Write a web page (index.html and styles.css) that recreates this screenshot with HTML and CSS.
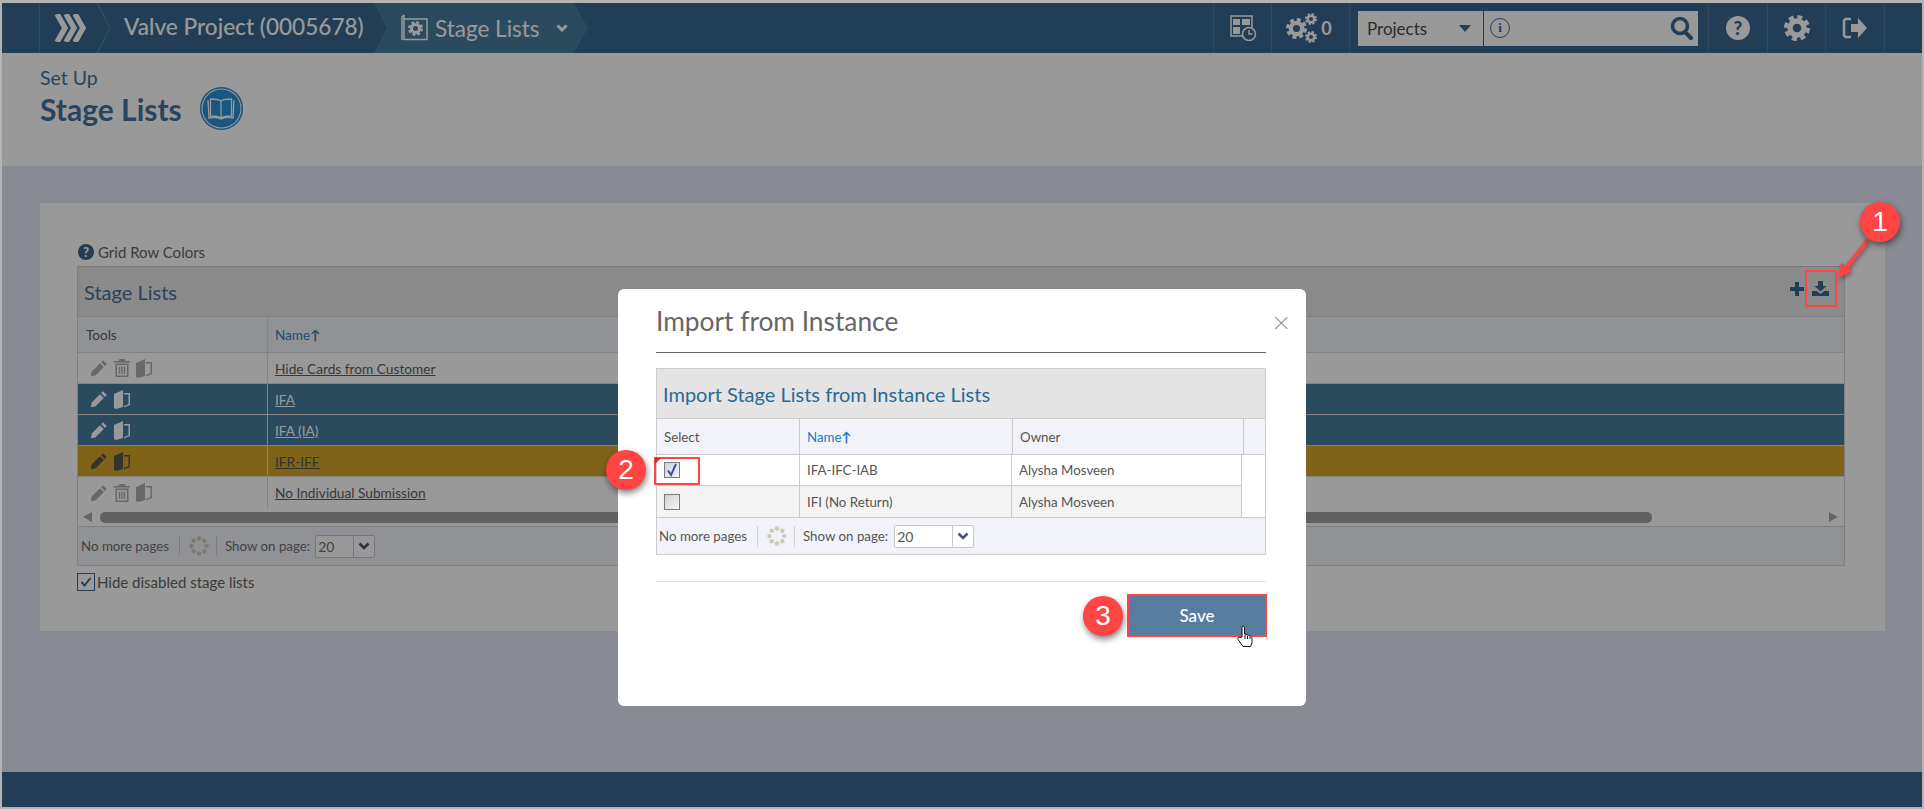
FILE: index.html
```html
<!DOCTYPE html>
<html lang="en">
<head>
<meta charset="utf-8">
<title>Stage Lists</title>
<link rel="stylesheet" href="styles.css">
</head>
<body>
<svg class="defs" width="0" height="0" aria-hidden="true">
  <symbol id="i-pencil" viewBox="0 0 18 18"><path d="M13 1.2l3.8 3.8-1.9 1.9L11.1 3.1zM10 4.2L13.8 8l-8.4 8.4-4.6.9.9-4.7z"/></symbol>
  <symbol id="i-trash" viewBox="0 0 16 18"><path d="M5.5 0h5l1 2H16v1.6H0V2h4.5zM1.5 4.6h13V18h-13zM3 6v10.500h10V6zM4.800 7.500h1.400v7.600H4.800zM7.300 7.500h1.400v7.600H7.300zM9.800 7.500h1.400v7.600H9.800z" fill-rule="evenodd"/></symbol>
  <symbol id="i-doors" viewBox="0 0 16 19"><path d="M0 4l9-4v17l-7 2-2-1zM10 3h6v12l-6 2.500V16l4.500-1.800V4.500H10z"/></symbol>
  <symbol id="i-gear" viewBox="0 0 24 24"><circle cx="12" cy="12" r="6.500" fill="none" stroke="currentColor" stroke-width="5"/><circle cx="12" cy="12" r="10" fill="none" stroke="currentColor" stroke-width="4" stroke-dasharray="4.500 3.354"/></symbol>
</svg>

<div class="page">
  <header class="topbar">
    <div class="tb-gutter"></div>
    <div class="crumb-logo">
      <svg width="34" height="28" viewBox="0 0 34 28"><path d="M3 0l8 14-8 14M12 0l8 14-8 14M21 0l8 14-8 14"/></svg>
    </div>
    <svg class="crumb-sep" width="13" height="50" viewBox="0 0 13 50"><path d="M0 0l13 25L0 50"/></svg>
    <div class="crumb-project">Valve Project (0005678)</div>
    <div class="crumb-stage">
      <svg class="stage-ico" width="27" height="28" viewBox="0 0 27 28">
        <path class="ico-line" d="M3 1v24.500h23V5H3M3 1L1 3v23"/>
        <use href="#i-gear" x="7" y="7" width="15" height="15"/>
      </svg>
      <span>Stage Lists</span>
      <svg class="chev" width="12" height="8" viewBox="0 0 12 8"><path d="M1.500 1.500L6 6l4.500-4.500"/></svg>
    </div>
    <div class="tb-right">
      <div class="tb-cell tb-w58">
        <svg width="28" height="28" viewBox="0 0 28 28"><path class="ico-line" d="M2 2h21v20H2z"/><path class="ico-fill" d="M4 5h7v6H4zM13 5h8v6h-8zM4 13h7v7H4z"/><circle cx="20" cy="20" r="6.500" fill="#39688f" stroke="currentColor" stroke-width="1.500"/><path class="ico-line" d="M20 16v4h3.500"/></svg>
      </div>
      <div class="tb-cell tb-w78">
        <svg class="gears" width="32" height="32" viewBox="0 0 32 32"><use href="#i-gear" x="0" y="6" width="21" height="21"/><use href="#i-gear" x="19" y="1" width="12" height="12"/><use href="#i-gear" x="19" y="19" width="12" height="12"/></svg>
        <span class="gear-count">0</span>
      </div>
      <div class="tb-cell tb-search">
        <div class="search-select"><span>Projects</span><i class="caret"></i></div>
        <div class="search-input">
          <span class="info">i</span>
          <svg width="23" height="24" viewBox="0 0 23 24"><circle cx="10" cy="10" r="7.500" fill="none" stroke="#39688f" stroke-width="3.500"/><path d="M15 16l6 6" stroke="#39688f" stroke-width="4" stroke-linecap="round"/></svg>
        </div>
      </div>
      <div class="tb-cell tb-w59"><span class="help">?</span></div>
      <div class="tb-cell tb-w58"><svg class="plain" width="26" height="26" viewBox="0 0 24 24"><use href="#i-gear"/></svg></div>
      <div class="tb-cell tb-w59">
        <svg width="26" height="24" viewBox="0 0 26 24"><path class="ico-line2" d="M9 3H3.500L2 4.500v15L3.500 21H9"/><path class="ico-fill" d="M9 8h7V2l9 10-9 10v-6H9z"/></svg>
      </div>
      <div class="tb-cell tb-end"></div>
    </div>
  </header>

  <section class="subhead">
    <div class="sub-small">Set Up</div>
    <div class="sub-row">
      <h1>Stage Lists</h1>
      <span class="book-badge">
        <svg width="30" height="24" viewBox="0 0 30 24"><path d="M2 3l1 18c4-1 8-1 12 1 4-2 8-2 12-1l1-18M15 4v18M4.500 2c4 0 8 0 10.500 2 2.500-2 6.500-2 10.500-2v17c-4 0-8 0-10.500 2-2.500-2-6.500-2-10.500-2z"/></svg>
      </span>
    </div>
  </section>

  <main class="main">
    <div class="card">
      <div class="legend"><span class="legend-q">?</span>Grid Row Colors</div>
      <div class="grid">
        <div class="grid-title">
          <span>Stage Lists</span>
          <div class="grid-actions">
            <svg width="14" height="14" viewBox="0 0 14 14"><path d="M5 0h4v5h5v4H9v5H5V9H0V5h5z"/></svg>
            <svg width="17" height="15" viewBox="0 0 17 15"><path d="M6 0h5v5h3.500L8.500 10.500 2.500 5H6zM0 10h4.500l4 3 4-3H17v5H0z"/></svg>
          </div>
        </div>
        <div class="row row-head">
          <div class="cell cell-tools">Tools</div>
          <div class="cell sort">Name<span class="sort-arrow">&#8593;</span></div>
        </div>
        <div class="row">
          <div class="cell cell-tools tools-muted">
            <svg width="18" height="18"><use href="#i-pencil"/></svg><svg width="16" height="18"><use href="#i-trash"/></svg><svg width="16" height="19"><use href="#i-doors"/></svg>
          </div>
          <div class="cell"><a>Hide Cards from Customer</a></div>
        </div>
        <div class="row row-teal">
          <div class="cell cell-tools">
            <svg width="18" height="18"><use href="#i-pencil"/></svg><svg width="16" height="19"><use href="#i-doors"/></svg>
          </div>
          <div class="cell"><a>IFA</a></div>
        </div>
        <div class="row row-teal">
          <div class="cell cell-tools">
            <svg width="18" height="18"><use href="#i-pencil"/></svg><svg width="16" height="19"><use href="#i-doors"/></svg>
          </div>
          <div class="cell"><a>IFA (IA)</a></div>
        </div>
        <div class="row row-gold">
          <div class="cell cell-tools">
            <svg width="18" height="18"><use href="#i-pencil"/></svg><svg width="16" height="19"><use href="#i-doors"/></svg>
          </div>
          <div class="cell"><a>IFR-IFF</a></div>
        </div>
        <div class="row row-last">
          <div class="cell cell-tools tools-muted">
            <svg width="18" height="18"><use href="#i-pencil"/></svg><svg width="16" height="18"><use href="#i-trash"/></svg><svg width="16" height="19"><use href="#i-doors"/></svg>
          </div>
          <div class="cell"><a>No Individual Submission</a></div>
        </div>
        <div class="hscroll">
          <i class="arrow-l"></i>
          <div class="thumb"></div>
          <i class="arrow-r"></i>
        </div>
        <div class="pager">
          <span class="pager-text">No more pages</span>
          <span class="pager-sep"></span>
          <svg class="spinner" width="20" height="20" viewBox="0 0 20 20"><g><circle cx="10" cy="2.500" r="2.300"/><circle cx="15.300" cy="4.700" r="2.300"/><circle cx="17.500" cy="10" r="2.300"/><circle cx="15.300" cy="15.300" r="2.300"/><circle cx="10" cy="17.500" r="2.300"/><circle cx="4.700" cy="15.300" r="2.300"/><circle cx="2.500" cy="10" r="2.300"/><circle cx="4.700" cy="4.700" r="2.300"/></g></svg>
          <span class="pager-sep"></span>
          <span class="pager-text">Show on page:</span>
          <div class="pager-select"><span>20</span><b><svg width="12" height="8" viewBox="0 0 12 8"><path d="M1.500 1.500L6 6l4.500-4.500"/></svg></b></div>
        </div>
      </div>
      <label class="hide-row">
        <span class="check-box"><svg width="12" height="10" viewBox="0 0 12 10"><path d="M1.500 5l3 3.500L10.500 1"/></svg></span>Hide disabled stage lists
      </label>
    </div>
  </main>

  <footer class="footer"></footer>

  <div class="backdrop"></div>

  <div class="modal">
    <div class="modal-head">
      <h2>Import from Instance</h2>
      <span class="modal-x">&#215;</span>
    </div>
    <div class="mgrid">
      <div class="mgrid-title">Import Stage Lists from Instance Lists</div>
      <div class="mrow mrow-head">
        <div>Select</div>
        <div class="sort">Name<span class="sort-arrow">&#8593;</span></div>
        <div>Owner</div>
        <div></div>
      </div>
      <div class="mrow mrow-data">
        <div><span class="ie-check"><svg width="12" height="14" viewBox="0 0 12 14"><path d="M2 7.500l3 4.500 5-11"/></svg></span></div>
        <div>IFA-IFC-IAB</div>
        <div>Alysha Mosveen</div>
      </div>
      <div class="mrow mrow-data mrow-alt">
        <div><span class="ie-check"></span></div>
        <div>IFI (No Return)</div>
        <div>Alysha Mosveen</div>
      </div>
      <div class="pager mpager">
        <span class="pager-text">No more pages</span>
        <span class="pager-sep"></span>
        <svg class="spinner" width="20" height="20" viewBox="0 0 20 20"><g><circle cx="10" cy="2.500" r="2.300"/><circle cx="15.300" cy="4.700" r="2.300"/><circle cx="17.500" cy="10" r="2.300"/><circle cx="15.300" cy="15.300" r="2.300"/><circle cx="10" cy="17.500" r="2.300"/><circle cx="4.700" cy="15.300" r="2.300"/><circle cx="2.500" cy="10" r="2.300"/><circle cx="4.700" cy="4.700" r="2.300"/></g></svg>
        <span class="pager-sep"></span>
        <span class="pager-text">Show on page:</span>
        <div class="pager-select"><span>20</span><b><svg width="12" height="8" viewBox="0 0 12 8"><path d="M1.500 1.500L6 6l4.500-4.500"/></svg></b></div>
      </div>
    </div>
    <div class="modal-rule"></div>
    <div class="modal-actions"><button class="save">Save</button></div>
  </div>

  <svg class="callout-arrow" width="50" height="56" viewBox="0 0 50 56"><path d="M38 10L16 38" stroke="#f44" stroke-width="4"/><path d="M8 48l14.200-6.700-11-8.600z" fill="#f44"/></svg>
  <span class="callout-box cb-1"></span>
  <span class="callout-box cb-2"></span>
  <i class="cb-corner"></i>
  <span class="badge b-1">1</span>
  <span class="badge b-2">2</span>
  <span class="badge b-3">3</span>
  <svg class="hand" width="16" height="22" viewBox="0 0 16 22"><path d="M5 12V2.500C5 1 7.500 1 7.500 2.500V9l5 1.500c1.500.5 2.500 1.500 2.500 3V18l-1.500 3.500H6L1 14.500c-1-2 1-3 2-2z" fill="#fff" stroke="#111" stroke-width="1"/><path d="M8 10v4M10.500 11v3M13 11.500V14" stroke="#111" stroke-width="1"/></svg>
</div>
</body>
</html>
```
FILE: styles.css
```css
* { box-sizing: border-box; }
html, body { margin: 0; padding: 0; }
body { font-family: Lato, "Open Sans", sans-serif; background: #fff; overflow: hidden; }
.defs { position: absolute; }

.page {
  position: relative;
  width: 1924px;
  height: 809px;
  display: flex;
  flex-direction: column;
  border: solid #b4b4b4;
  border-width: 3px 2px 2px 2px;
  background: #e3e8f5;
  overflow: hidden;
}

/* top bar */
.topbar { height: 50px; flex: none; display: flex; align-items: stretch; background: #39688f; color: #fff; }
.tb-gutter { width: 38px; border-right: 1px solid #4c7ba1; }
.crumb-logo { width: 57px; display: flex; align-items: center; justify-content: center; padding-left: 4px; }
.crumb-logo svg { fill: none; stroke: #fff; stroke-width: 5.500; }
.crumb-sep { fill: none; stroke: #5a8bb0; flex: none; }
.crumb-project { width: 264px; flex: none; padding-left: 14px; font-size: 22.600px; line-height: 48px; font-weight: 500; white-space: nowrap; }
.crumb-stage {
  width: 214px; flex: none; display: flex; align-items: center; gap: 7px;
  padding-left: 27px; background: #467d9d; font-size: 22.500px;
  clip-path: polygon(0 0, 200px 0, 214px 50%, 200px 100%, 0 100%, 13px 50%);
}
.stage-ico { flex: none; }
.chev { fill: none; stroke: currentColor; stroke-width: 3; margin-left: 9px; }
.ico-line { fill: none; stroke: currentColor; stroke-width: 1.500; }
.ico-line2 { fill: none; stroke: currentColor; stroke-width: 2.500; }
.ico-fill { fill: currentColor; }
.tb-right { margin-left: auto; display: flex; align-items: stretch; }
.tb-cell { display: flex; align-items: center; justify-content: center; border-left: 1px solid #4c7ba1; }
.tb-w58 { width: 58px; }
.tb-w59 { width: 59px; }
.tb-w78 { width: 78px; gap: 3px; padding-right: 3px; }
.tb-end { width: 38px; }
.gear-count { font-size: 18px; font-weight: 700; }
.tb-search { width: 359px; padding: 0 10px 0 8px; justify-content: flex-start; }
.search-select {
  width: 125px; height: 35px; background: #fff; color: #4a4a4a; font-size: 17px;
  display: flex; align-items: center; justify-content: space-between; padding: 0 12px 0 9px;
}
.caret { border-left: 6px solid transparent; border-right: 6px solid transparent; border-top: 7px solid #39688f; }
.search-input {
  flex: 1; height: 35px; background: #fff; border-left: 1px solid #39688f;
  display: flex; align-items: center; justify-content: space-between; padding: 0 5px 0 6px;
}
.info {
  width: 20px; height: 20px; border: 1px solid #39688f; border-radius: 50%; color: #39688f;
  font: 700 13px/18px "Liberation Serif", serif; text-align: center;
}
.help {
  width: 24px; height: 24px; border-radius: 50%; background: #fff; color: #39688f;
  font: 900 19px/24px Lato, sans-serif; text-align: center;
}
.plain { color: #fff; }

/* sub header */
.subhead { height: 113px; flex: none; background: #fff; padding: 13px 38px 0; color: #47729b; }
.sub-small { font-size: 19.500px; line-height: 24px; }
.sub-row { display: flex; align-items: center; gap: 18px; margin-top: -3px; }
.sub-row h1 { margin: 0; font-size: 30px; line-height: 42px; font-weight: 700; }
.book-badge {
  width: 43px; height: 43px; border-radius: 50%; background: #2b8fd6;
  box-shadow: inset 0 0 0 1.500px #2b8fd6, inset 0 0 0 2.500px #fff;
  display: flex; align-items: center; justify-content: center;
}
.book-badge svg { fill: none; stroke: #fff; stroke-width: 1.300; }

/* main */
.main { flex: 1; padding: 37px 37px 0 38px; min-height: 0; }
.card { height: 428px; background: #fff; padding: 36px 40px 0 37px; }
.legend { height: 27px; padding: 0 0 2px 1px; display: flex; align-items: center; gap: 4px; font-size: 15px; color: #666; }
.legend-q {
  width: 16px; height: 16px; border-radius: 50%; background: #39688f; color: #fff;
  font: 900 13px/16px Lato, sans-serif; text-align: center;
}

.grid { border: 1px solid #d4d4d4; border-top-color: #c8c8c8; background: #f2f3f8; }
.grid-title {
  height: 50px; background: #e6e6e6; border-bottom: 1px solid #d4d4d4; padding: 0 6px;
  display: flex; align-items: center; justify-content: space-between;
  font-size: 20px; color: #47729b;
}
.grid-actions { display: flex; align-items: center; gap: 8px; padding: 0 9px 6px 0; }
.grid-actions svg { fill: #39688f; }
.row { display: grid; grid-template-columns: 189px 1fr; height: 31px; font-size: 13.700px; color: #606060; background: #fff; border-bottom: 1px solid #e0e0e0; }
.cell { display: flex; align-items: center; padding-left: 7px; border-left: 1px solid transparent; }
.cell + .cell { border-left-color: #dcdcdc; }
.cell a { text-decoration: underline; }
.row-head { height: 36px; background: #f2f3f8; border-bottom-color: #dcdcdc; font-size: 13.500px; }
.row-head .cell { padding-left: 7px; }
.cell-tools { padding-left: 11px; gap: 6px; }
.row-head .cell-tools { gap: 0; }
.cell-tools svg { fill: #fff; flex: none; }
.tools-muted svg { fill: #aeaeae; }
.row-teal { background: #467d9d; color: #fff; border-bottom-color: #ddd; }
.row-teal .cell + .cell { border-left-color: #ddd; }
.row-gold { background: #d5a32b; color: #555; border-bottom-color: #ddd; }
.row-gold .cell + .cell { border-left-color: #ddd; }
.row-gold .cell-tools svg { fill: #555; }
.row-last { border-bottom: 0; height: 31px; }
.sort { color: #2f80c4; }
.sort-arrow { font-weight: 700; }
.hscroll { height: 19px; background: #fff; display: flex; align-items: center; padding: 0 6px 0 5px; border-bottom: 1px solid #d4d4d4; }
.arrow-l { border-top: 5px solid transparent; border-bottom: 5px solid transparent; border-right: 9px solid #aaa; }
.arrow-r { border-top: 5px solid transparent; border-bottom: 5px solid transparent; border-left: 9px solid #aaa; margin-left: auto; }
.thumb { width: 1552px; height: 11px; margin-left: 8px; background: #a0a0a0; border-radius: 5px; }
.pager { height: 38px; display: flex; align-items: center; padding: 0 0 0 3px; font-size: 13.300px; color: #707070; background: #f2f3f8; }
.pager-text { white-space: nowrap; }
.pager-sep { width: 1px; height: 20px; background: #d2d2d2; margin: 0 9px 0 10px; }
.spinner + .pager-sep { margin: 0 8px 0 7px; }
.spinner { fill: #cfcabc; margin: 0; }
.pager-select {
  width: 60px; height: 23px; margin-left: 5px; display: flex; border: 1px solid #c9c9c9;
  border-radius: 2px; background: #fff; font-size: 14px; line-height: 21px;
}
.pager-select span { flex: 1; padding-left: 2px; }
.pager-select b { width: 21px; border-left: 1px solid #c9c9c9; display: flex; align-items: center; justify-content: center; }
.pager-select svg { fill: none; stroke: #47526a; stroke-width: 2.500; }

.hide-row { display: flex; align-items: center; gap: 2px; margin-top: 7px; font-size: 15px; color: #666; }
.check-box { width: 18px; height: 18px; border: 1px solid #39688f; display: flex; align-items: center; justify-content: center; }
.check-box svg { fill: none; stroke: #39688f; stroke-width: 2; }

.footer { height: 35px; flex: none; background: #39688f; margin-top: auto; }

/* overlay */
.backdrop { position: absolute; inset: 0; background: rgba(0, 0, 0, .4); }
.modal {
  position: absolute; left: 616px; top: 286px; width: 688px; height: 417px;
  background: #fff; border-radius: 6px; padding: 0 40px 0 38px;
}
.modal-head { height: 64px; border-bottom: 1px solid #666; display: flex; align-items: center; justify-content: space-between; position: relative; }
.modal-head h2 { margin: 0; font-size: 26.300px; font-weight: 400; color: #666; }
.modal-x { position: absolute; right: -24px; top: 19px; font-size: 30px; line-height: 26px; color: #999; font-weight: 300; }
.mgrid { margin-top: 15px; border: 1px solid #ccc; background: #fff; font-size: 13.300px; color: #555; }
.mgrid-title { height: 50px; background: #e4e4e4; border-bottom: 1px solid #ccc; padding-left: 6px; font-size: 20px; line-height: 50px; color: #2a6a96; }
.mrow { display: grid; grid-template-columns: 142px 213px 231px 22px; height: 36px; }
.mrow > div { display: flex; align-items: center; padding-left: 7px; border-left: 1px solid #ccc; }
.mrow > div:first-child { border-left: 0; }
.mrow-head { background: #f2f3f8; border-bottom: 1px solid #ccc; }
.mrow-head > .sort { color: #1a7ac4; }
.mrow-data { grid-template-columns: 142px 212px 230px; width: 585px; height: 31px; border-bottom: 1px solid #ccc; border-right: 1px solid #ccc; }
.mrow-alt { background: #f3f3f3; border-bottom: 0; }
.ie-check {
  width: 16px; height: 16px; border: 1px solid #7b7b7b; background: linear-gradient(135deg, #cfd2d8, #f4f4f6);
  display: flex; align-items: center; justify-content: center;
}
.ie-check svg { fill: none; stroke: #3b4fb0; stroke-width: 2; }
.mpager { border-top: 1px solid #ccc; color: #555; height: 37px; padding-left: 2px; }
.mpager .pager-sep { height: 21px; }
.mpager .pager-select { width: 80px; margin-left: 6px; }
.modal-rule { height: 1px; background: #e2e2e2; margin-top: 26px; }
.modal-actions { display: flex; justify-content: flex-end; padding-top: 12px; }
.save {
  width: 140px; height: 43px; border: 2px solid #f44; background: #567da0; color: #fff;
  font: 500 17px Lato, sans-serif; margin-right: -1px;
}

/* callouts */
.badge {
  position: absolute; width: 40px; height: 40px; border-radius: 50%; background: #ff4444;
  color: #fff; text-align: center; font: 400 28px/40px "Liberation Sans", sans-serif;
  box-shadow: 1px 3px 6px rgba(0, 0, 0, .5);
}
.b-1 { left: 1858px; top: 199px; }
.b-2 { left: 604px; top: 447px; }
.b-3 { left: 1081px; top: 593px; }
.callout-box { position: absolute; border: 2px solid #f44; }
.cb-1 { left: 1803px; top: 267px; width: 32px; height: 37px; }
.cb-2 { left: 652px; top: 454px; width: 46px; height: 28px; }
.cb-corner { position: absolute; left: 653px; top: 455px; border-top: 6px solid #d22; border-right: 6px solid transparent; }
.callout-arrow { position: absolute; left: 1828px; top: 227px; filter: drop-shadow(1px 2px 2px rgba(0, 0, 0, .4)); }
.hand { position: absolute; left: 1235px; top: 622px; }
```
